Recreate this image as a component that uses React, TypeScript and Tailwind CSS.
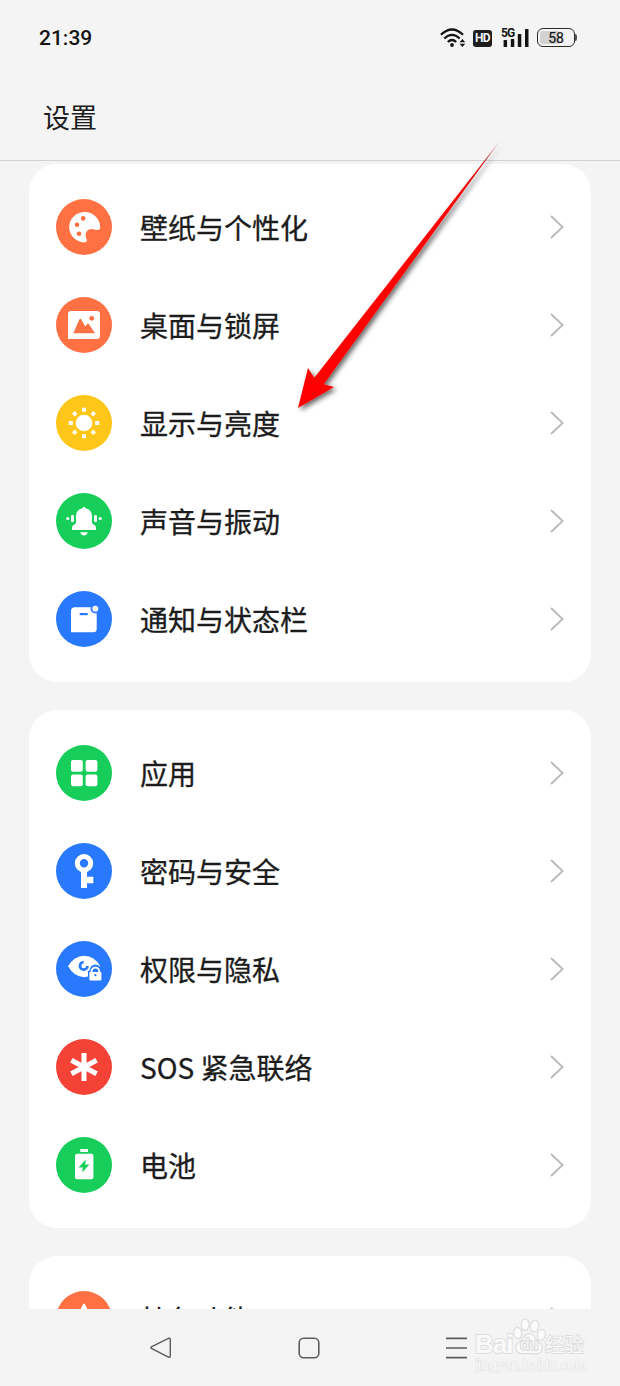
import type { ReactNode } from "react";

interface SettingItem {
  label: string;
  color: string;
  icon: ReactNode;
}

const orange = "bg-[#ff7043]";
const green = "bg-[#18ce5a]";
const blue = "bg-[#2979ff]";

const groups: SettingItem[][] = [
  [
    {
      label: "壁纸与个性化",
      color: orange,
      icon: (
        <>
          <path d="M44 30A15.5 15.2 0 1 0 29.8 43.3C31.4 42.3 30.9 40.6 30.2 39C28.6 34.5 30.8 30.2 35.5 30C38.5 30 41 32.4 44 30Z" />
          <g className="fill-[#ff7043]">
            <circle cx="27.2" cy="19.4" r="2.3" />
            <circle cx="21" cy="25.7" r="2.3" />
            <circle cx="23" cy="34.7" r="2.3" />
          </g>
        </>
      ),
    },
    {
      label: "桌面与锁屏",
      color: orange,
      icon: (
        <>
          <path d="M12 17a3 3 0 0 1 3-3h26a3 3 0 0 1 3 3v22a3 3 0 0 1-3 3H12Z" />
          <g className="fill-[#ff7043]">
            <circle cx="35.7" cy="21.3" r="2.4" />
            <path d="M17.3 36.3L23.3 22.6Q24.3 21 25.3 22.6L29.2 29.6L31.2 27Q32 26.2 32.8 27L39 36.3Z" />
          </g>
        </>
      ),
    },
    {
      label: "显示与亮度",
      color: "bg-[#ffc61a]",
      icon: (
        <>
          <circle cx="28" cy="28" r="8.3" />
          <path
            className="stroke-white"
            strokeWidth="3.8"
            d="M28 12.8v4M28 39.2v4M12.8 28h4M39.2 28h4M17.3 17.3l2.8 2.8M35.9 35.9l2.8 2.8M38.7 17.3l-2.8 2.8M20.1 35.9l-2.8 2.8"
          />
        </>
      ),
    },
    {
      label: "声音与振动",
      color: green,
      icon: (
        <>
          <path d="M26.6 15.2Q28 12.4 29.4 15.2Q36 16.6 36 23V30.3L39.5 33Q40 33.5 40 34.5V37H16V34.5Q16 33.5 16.5 33L20 30.3V23Q20 16.6 26.6 15.2Z" />
          <path d="M24.3 39.3h7.4Q30.8 42.5 28 42.5T24.3 39.3Z" />
          <rect x="15" y="22" width="3" height="7" rx="1.2" />
          <rect x="38" y="22" width="3" height="7" rx="1.2" />
          <circle cx="11.8" cy="25.5" r="1.6" />
          <circle cx="44.2" cy="25.5" r="1.6" />
        </>
      ),
    },
    {
      label: "通知与状态栏",
      color: blue,
      icon: (
        <>
          <path d="M15 20a3.7 3.7 0 0 1 3.7-3.7H38a3 3 0 0 1 2.7 3V38a3.3 3.3 0 0 1-3.3 3.3H15Z" />
          <circle cx="39.3" cy="17.7" r="4.8" className="fill-[#2979ff]" />
          <circle cx="39.3" cy="17.7" r="3" />
          <rect x="23.7" y="22" width="8" height="2.2" className="fill-[#2979ff]" />
        </>
      ),
    },
  ],
  [
    {
      label: "应用",
      color: green,
      icon: (
        <>
          <rect x="15" y="15" width="11.8" height="11.8" rx="2" />
          <rect x="29.6" y="15" width="11.8" height="11.8" rx="2" />
          <rect x="15" y="29.4" width="11.8" height="11.8" rx="2" />
          <rect x="29.6" y="29.4" width="11.8" height="11.8" rx="2" />
        </>
      ),
    },
    {
      label: "密码与安全",
      color: blue,
      icon: (
        <>
          <circle cx="28" cy="20.3" r="6.7" fill="none" className="stroke-white" strokeWidth="5" />
          <path d="M25 27h6v6.7h6.3v6.6H31V45h-6Z" />
        </>
      ),
    },
    {
      label: "权限与隐私",
      color: blue,
      icon: (
        <>
          <path d="M12 25.3Q18 14.7 28.2 14.7T44.3 25.3Q38 36.2 28.2 36.2T12 25.3Z" />
          <path
            d="M27.6 21.2A3.7 3.7 0 1 0 31.4 25"
            fill="none"
            className="stroke-[#2979ff]"
            strokeWidth="2.8"
          />
          <path d="M32 40V30.2L33.8 29A5.6 5.6 0 0 1 45 29L46.5 30.5V40Z" className="fill-[#2979ff]" />
          <rect x="33.4" y="31" width="12" height="8.4" rx="0.8" />
          <path
            d="M35.6 32v-1.6a3.8 3.8 0 0 1 7.6 0v1.6"
            fill="none"
            className="stroke-white"
            strokeWidth="1.9"
          />
          <circle cx="39.4" cy="34.2" r="1.1" className="fill-[#2979ff]" />
        </>
      ),
    },
    {
      label: "SOS 紧急联络",
      color: "bg-[#f44336]",
      icon: (
        <path
          className="stroke-white"
          strokeWidth="5"
          d="M28 14v28M15.4 21.2l25.2 13.6M40.6 21.2L15.4 34.8"
        />
      ),
    },
    {
      label: "电池",
      color: green,
      icon: (
        <>
          <rect x="24.3" y="12" width="7.7" height="3" />
          <rect x="19" y="16.8" width="18.4" height="25.4" rx="2" />
          <path d="M29.8 22.6L22.6 30.4h4.2L26.2 35.4L33.4 27.6h-4.2Z" className="fill-[#18ce5a]" />
        </>
      ),
    },
  ],
  [
    {
      label: "特色功能",
      color: orange,
      icon: <path d="M28 12.5Q29 12.5 29.4 14L33 21.5L44 23L36 30L38.5 41L28 35L17.5 41L20 30L12 23L23 21.5L26.6 14Q27 12.5 28 12.5Z" />,
    },
  ],
];

function StatusBar() {
  return (
    <div className="flex h-[75px] shrink-0 items-center justify-between pl-[39px] pr-[43px] font-['Roboto',sans-serif] text-[#141414]">
      <span className="text-[21px] font-medium leading-6">21:39</span>
      <div className="flex items-center">
        <svg width="26" height="20" viewBox="0 0 26 20" fill="none" stroke="currentColor">
          <path d="M0.9 6.8Q12 -3.8 23.1 6.8" strokeWidth="2.2" />
          <path d="M4.3 10.5Q12 3.2 19.7 10.5" strokeWidth="2.2" />
          <path d="M7.8 14Q12 10 16.2 14" strokeWidth="2.2" />
          <circle cx="12" cy="17" r="1.9" fill="currentColor" stroke="none" />
          <path d="M19.6 14.2L22.4 11L25.2 14.2ZM19.6 15.8L22.4 19L25.2 15.8Z" fill="currentColor" stroke="none" />
        </svg>
        <span className="ml-[7px] mt-px flex h-[17px] w-[19px] items-center justify-center rounded-[3px] bg-[#1c1c1c] text-[12px] font-bold leading-none tracking-[-0.6px] text-[#f4f4f4]">
          HD
        </span>
        <div className="relative ml-[9px] h-5 w-7">
          <span className="absolute -top-px left-0 text-[12px] font-bold leading-[12px] tracking-[-0.8px]">5G</span>
          <svg width="28" height="20" viewBox="0 0 28 20" fill="currentColor">
            <rect x="2.6" y="12" width="3.5" height="7" rx="0.6" />
            <rect x="9.8" y="11" width="3.5" height="8" rx="0.6" />
            <rect x="16.8" y="6" width="3.5" height="13" rx="0.6" />
            <rect x="24" y="1" width="3.5" height="18" rx="0.6" />
          </svg>
        </div>
        <div className="ml-2 flex items-center">
          <div className="flex h-[19px] w-[38px] items-center justify-center rounded-md border-[1.5px] border-[#2b2b2b] bg-linear-to-r from-[#d2d2d2] from-58% to-transparent to-58% bg-clip-content p-[2px] text-[14px] leading-none [-webkit-text-stroke:0.2px_#141414]">
            58
          </div>
          <div className="h-[7px] w-[2px] rounded-r-sm bg-[#555]" />
        </div>
      </div>
    </div>
  );
}

function SettingRow({ item }: { item: SettingItem }) {
  return (
    <li className="flex h-[98px] shrink-0 items-center gap-7 px-[27px]">
      <div className={`size-14 shrink-0 rounded-full ${item.color}`}>
        <svg className="fill-white" width="56" height="56" viewBox="0 0 56 56">
          {item.icon}
        </svg>
      </div>
      <span className="flex-1 text-[28px] leading-10 [-webkit-text-stroke:0.3px_#1c1c1c]">{item.label}</span>
      <svg width="14" height="24" viewBox="0 0 14 24" fill="none" stroke="#bcbcbc" strokeWidth="2">
        <path d="M1 1L12.6 12L1 23" />
      </svg>
    </li>
  );
}

function Watermark() {
  return (
    <div className="absolute left-[475px] top-[8px] w-[120px] whitespace-nowrap font-['Liberation_Sans','Noto_Sans_CJK_SC',sans-serif] font-bold leading-none text-[#fafafa] [paint-order:stroke_fill] [-webkit-text-stroke:1.8px_#dedede]">
      <div className="relative h-[40px]">
        <span className="absolute left-0 top-[14px] text-[26px] tracking-[-1px]">Bai</span>
        <svg
          className="absolute left-[37px] top-[1px] [paint-order:normal]"
          width="36"
          height="38"
          viewBox="0 0 36 38"
          fill="#fbfbfb"
          stroke="#dcdcdc"
          strokeWidth="1.2"
        >
          <ellipse cx="5.7" cy="15" rx="4" ry="5.6" transform="rotate(-10 5.7 15)" />
          <ellipse cx="13" cy="6.8" rx="4" ry="5.8" />
          <ellipse cx="22.6" cy="8" rx="4" ry="5.8" transform="rotate(12 22.6 8)" />
          <ellipse cx="29.3" cy="17" rx="4" ry="5.4" transform="rotate(12 29.3 17)" />
          <path d="M17 15.5Q20.5 15.5 23 20T29 26Q32 31 28 34.5Q25 36.8 17 35.4Q8.5 36.8 5.5 34Q2 30 5 26Q9.5 23 11.5 19.5T17 15.5Z" />
        </svg>
        <span className="absolute left-[45px] top-[20px] text-[16px] tracking-[-1px] text-[#f0f0f0] [-webkit-text-stroke:1.4px_#d4d4d4]">du</span>
        <span className="absolute left-[70px] top-[19px] text-[19.5px] font-normal">经验</span>
      </div>
      <div className="mt-[2px] text-[13.8px] font-normal [-webkit-text-stroke:1.2px_#e2e2e2]">jingyan.baidu.com</div>
    </div>
  );
}

function NavBar() {
  return (
    <nav className="relative h-[77px] shrink-0 bg-[#f4f4f4]">
      <div className="flex h-full items-center pl-[150px] text-[#5c5c5c]">
        <svg width="22" height="22" viewBox="0 0 22 22" fill="none" stroke="currentColor" strokeWidth="1.4">
          <path d="M1.4 9.9L18.4 1.3Q20.3 0.8 20.3 2.6V18.8Q20.3 20.8 18.4 20L1.4 11.4Q0.6 10.6 1.4 9.9Z" />
        </svg>
        <svg className="ml-[126px]" width="22" height="22" viewBox="0 0 22 22" fill="none" stroke="currentColor" strokeWidth="1.6">
          <rect x="1.2" y="1.2" width="19.6" height="19.6" rx="4.5" />
        </svg>
        <svg className="ml-[126px]" width="21" height="22" viewBox="0 0 21 22" stroke="currentColor" strokeWidth="1.6">
          <path d="M0 1.4h21M0 11h21M0 20.6h21" />
        </svg>
      </div>
      <Watermark />
    </nav>
  );
}

export default function App() {
  return (
    <div className="relative flex h-[1386px] w-[620px] flex-col overflow-hidden bg-[#f4f4f4] font-['Noto_Sans_CJK_SC',sans-serif] text-[#1c1c1c]">
      <StatusBar />
      <header className="flex h-[86px] shrink-0 items-center border-b border-[#d2d2d2] pb-[2px] pl-[43px]">
        <h1 className="text-[27px] leading-10">设置</h1>
      </header>

      <main className="flex min-h-0 flex-1 flex-col gap-7 overflow-hidden px-[29px] pt-[3px]">
        {groups.map((group) => (
          <ul key={group[0].label} className="shrink-0 rounded-[28px] bg-white py-[14px]">
            {group.map((item) => (
              <SettingRow key={item.label} item={item} />
            ))}
          </ul>
        ))}
      </main>

      <NavBar />

      {/* Pointer to the display row */}
      <svg className="absolute left-[280px] top-[130px]" width="240" height="300" viewBox="0 0 240 300">
        <defs>
          <linearGradient id="shaft" gradientUnits="userSpaceOnUse" x1="220" y1="10" x2="170" y2="75">
            <stop offset="0" stopColor="#a03030" stopOpacity="0.5" />
            <stop offset="0.3" stopColor="#d0101a" />
            <stop offset="1" stopColor="#ff0000" />
          </linearGradient>
          <filter id="drop" x="-20%" y="-20%" width="140%" height="140%">
            <feDropShadow dx="2.5" dy="2.5" stdDeviation="2.5" floodColor="#000" floodOpacity="0.6" />
          </filter>
        </defs>
        <path
          d="M18 278L28 238L34.3 247.7L220 10.7L43.7 254.3L54 257Z"
          fill="url(#shaft)"
          filter="url(#drop)"
        />
      </svg>
    </div>
  );
}
